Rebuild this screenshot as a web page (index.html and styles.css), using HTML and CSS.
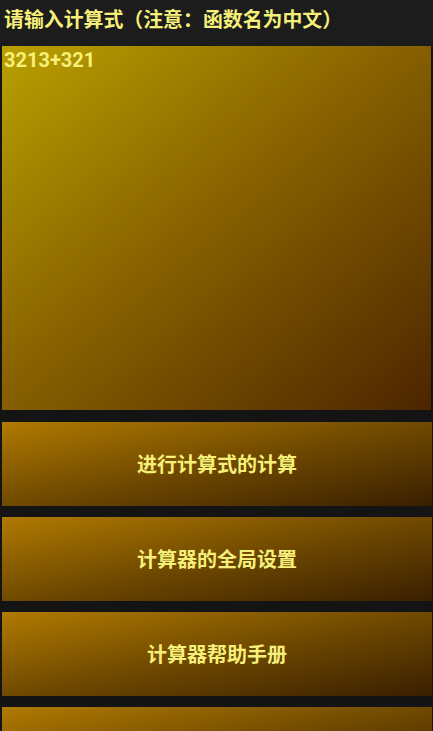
FILE: index.html
```html
<!DOCTYPE html>
<html lang="zh">
<head>
  <meta charset="UTF-8">
  <meta name="viewport" content="width=device-width, initial-scale=1.0">
  <title>计算器</title>
  <link rel="stylesheet" href="styles.css">
</head>
<body>
  <h2 class="title">请输入计算式（注意：函数名为中文）</h2>
  <div class="input-box">3213+321</div>
  <div class="btn-list">
    <div class="btn">进行计算式的计算</div>
    <div class="btn">计算器的全局设置</div>
    <div class="btn">计算器帮助手册</div>
    <div class="btn">&nbsp;</div>
  </div>
</body>
</html>
```

FILE: styles.css
```css
* {margin:0; padding:0; box-sizing:border-box;}
html, body{
  height: 100%;
  overflow: hidden;
}
body{
  background: #141414;
  font-family: "Noto Sans CJK SC", "Noto Sans", sans-serif;
  font-weight: bold;
  color: #f6f07a;
}
.title{
  height: 46px;
  padding: 4px 4px 0;
  font-size: 19.9px;
  line-height: 30px;
  background: #1c1c1c;
  font-weight: bold;
  white-space: nowrap;
}
.input-box{
  height: 364px;
  margin: 0 2px;
  padding: 1px 2px;
  font-family: Roboto, "Noto Sans", sans-serif;
  font-size: 20px;
  line-height: 26px;
  background: linear-gradient(to bottom right, #b9a000 0%, #8a6400 45%, #4c2500 100%);
}
.btn-list{
  display: flex;
  flex-direction: column;
  gap: 11px;
  margin: 12px 1px 0 2px;
}
.btn{
  height: 84px;
  flex-shrink: 0;
  display: flex;
  align-items: center;
  justify-content: center;
  font-size: 20px;
  padding-bottom: 2px;
  background: linear-gradient(to bottom right, #b07a00 0%, #6a4500 55%, #3a1f00 100%);
}
```
